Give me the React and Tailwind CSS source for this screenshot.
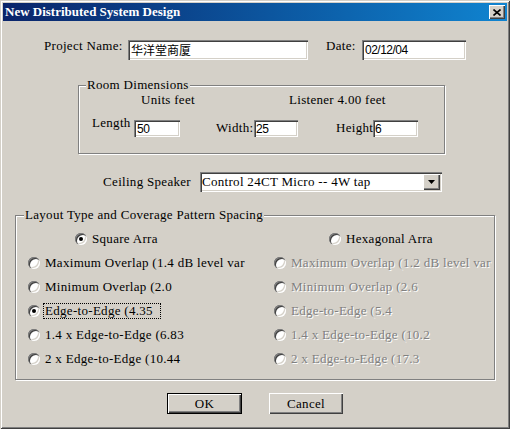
import React from 'react';

const ui = "font-['Liberation_Serif',serif] text-[13px] leading-[12px] tracking-[0.3px]";
const sunken = 'bg-white shadow-[inset_1px_1px_0_#808080,inset_2px_2px_0_#404040,inset_-1px_-1px_0_#fff,inset_-2px_-2px_0_#d4d0c8]';
const raised = 'bg-[#d4d0c8] shadow-[inset_1px_1px_0_#fff,inset_-1px_-1px_0_#404040,inset_-2px_-2px_0_#808080]';
const etched = 'border border-[#808080] shadow-[inset_1px_1px_0_#fff,1px_1px_0_#fff]';

const CloseIcon = () => (
  <svg width="8" height="7" viewBox="0 0 8 7">
    <path d="M0.5 0.5l7 6M7.5 0.5l-7 6" stroke="#000" strokeWidth="1.6" />
  </svg>
);

const DownIcon = () => (
  <svg width="7" height="4" viewBox="0 0 7 4">
    <path d="M0 0h7l-3.5 4z" fill="#000" />
  </svg>
);

const Radio = ({ checked }) => (
  <span className={`flex h-[12px] w-[12px] shrink-0 items-center justify-center rounded-full ${sunken}`}>
    {checked && <span className="h-[4px] w-[4px] rounded-full bg-black" />}
  </span>
);

const Option = ({ label, checked, disabled, focused }) => (
  <div className="flex h-[24px] items-center gap-[5px]">
    <Radio checked={checked} />
    <span
      className={`whitespace-nowrap ${
        disabled ? 'text-[#808080] [text-shadow:1px_1px_0_#fff]' : 'text-black'
      } ${focused ? 'pr-[6px] outline-1 outline-dotted outline-black outline-offset-1' : ''}`}
    >
      {label}
    </span>
  </div>
);

const Legend = ({ children, className }) => (
  <span className={`-mt-[7px] self-start bg-[#d4d0c8] px-[1px] ${className}`}>{children}</span>
);

// visible part of each caption (the dialog clips the rest)
const leftOptions = [
  { label: 'Maximum Overlap (1.4 dB level var' },
  { label: 'Minimum Overlap (2.0' },
  { label: 'Edge-to-Edge (4.35', checked: true, focused: true },
  { label: '1.4 x Edge-to-Edge (6.83' },
  { label: '2 x Edge-to-Edge (10.44' },
];

const rightOptions = [
  { label: 'Maximum Overlap (1.2 dB level var' },
  { label: 'Minimum Overlap (2.6' },
  { label: 'Edge-to-Edge (5.4' },
  { label: '1.4 x Edge-to-Edge (10.2' },
  { label: '2 x Edge-to-Edge (17.3' },
];

const inputText = "font-['Liberation_Sans',Arial,sans-serif] text-[12px] tracking-[-0.5px]";

export default function App() {
  return (
    <div
      className={`flex h-[429px] w-[510px] flex-col bg-[#d4d0c8] p-[3px] text-black shadow-[inset_1px_1px_0_#d4d0c8,inset_-1px_-1px_0_#404040,inset_2px_2px_0_#fff,inset_-2px_-2px_0_#808080] ${ui}`}
    >
      {/* Title bar */}
      <div className="flex h-[18px] items-center justify-between bg-gradient-to-r from-[#0a246a] to-[#1084d0] pl-[2px] pr-[2px]">
        <span className="font-bold tracking-normal text-white">New Distributed System Design</span>
        <span className={`flex h-[14px] w-[16px] items-center justify-center ${raised}`}>
          <CloseIcon />
        </span>
      </div>

      {/* Project name / date */}
      <div className="mt-[19px] flex items-start pl-[41px]">
        <span className="w-[84px]">Project Name:</span>
        <div className={`flex h-[20px] w-[180px] items-center pl-[3px] ${sunken}`}>
          <span className="font-['Noto_Sans_CJK_SC',sans-serif] text-[12px] tracking-normal">华洋堂商厦</span>
        </div>
        <span className="ml-[18px] w-[36px]">Date:</span>
        <div className={`flex h-[20px] w-[104px] items-center pl-[3px] ${sunken}`}>
          <span className={inputText}>02/12/04</span>
        </div>
      </div>

      {/* Room dimensions */}
      <div className={`ml-[75px] mt-[25px] flex h-[69px] w-[367px] flex-col ${etched}`}>
        <Legend className="ml-[7px]">Room Dimensions</Legend>
        <div className="mt-[3px] flex">
          <span className="ml-[62px] w-[148px]">Units feet</span>
          <span>Listener 4.00 feet</span>
        </div>
        <div className="mt-[14px] flex items-start">
          <span className="-mt-[3px] ml-[13px] w-[42px]">Length</span>
          <div className={`flex h-[17px] w-[46px] items-center pl-[3px] ${sunken}`}>
            <span className={inputText}>50</span>
          </div>
          <span className="ml-[36px] mt-[2px] w-[38px]">Width:</span>
          <div className={`flex h-[17px] w-[44px] items-center pl-[2px] ${sunken}`}>
            <span className={inputText}>25</span>
          </div>
          <span className="ml-[38px] mt-[2px] w-[37px]">Height</span>
          <div className={`flex h-[17px] w-[45px] items-center pl-[2px] ${sunken}`}>
            <span className={inputText}>6</span>
          </div>
        </div>
      </div>

      {/* Ceiling speaker model */}
      <div className="mt-[18px] flex items-start">
        <span className="ml-[97px] mt-[4px] w-[91px] whitespace-nowrap text-right">Ceiling Speaker</span>
        <div className={`ml-[9px] flex h-[20px] w-[242px] items-center justify-between pl-[2px] pr-[2px] ${sunken}`}>
          <span>Control 24CT Micro -- 4W tap</span>
          <span className={`flex h-[16px] w-[17px] items-center justify-center ${raised}`}>
            <DownIcon />
          </span>
        </div>
      </div>

      {/* Layout type */}
      <div className={`ml-[12px] mt-[23px] flex h-[165px] w-[480px] flex-col ${etched}`}>
        <Legend className="ml-[8px]">Layout Type and Coverage Pattern Spacing</Legend>
        <div className="mt-[6px] grid grid-cols-[246px_1fr] pl-[12px]">
          <div className="flex flex-col">
            <div className="ml-[47px]">
              <Option label="Square Arra" checked />
            </div>
            {leftOptions.map((o) => (
              <Option key={o.label} {...o} />
            ))}
          </div>
          <div className="flex flex-col">
            <div className="ml-[55px]">
              <Option label="Hexagonal Arra" />
            </div>
            {rightOptions.map((o) => (
              <Option key={o.label} {...o} disabled />
            ))}
          </div>
        </div>
      </div>

      {/* Buttons */}
      <div className="mt-[13px] flex">
        <button className="ml-[164px] h-[21px] w-[75px] border border-black">
          <span className={`flex h-full w-full items-center justify-center ${raised}`}>OK</span>
        </button>
        <button className={`ml-[27px] flex h-[21px] w-[74px] items-center justify-center ${raised}`}>
          Cancel
        </button>
      </div>
    </div>
  );
}
